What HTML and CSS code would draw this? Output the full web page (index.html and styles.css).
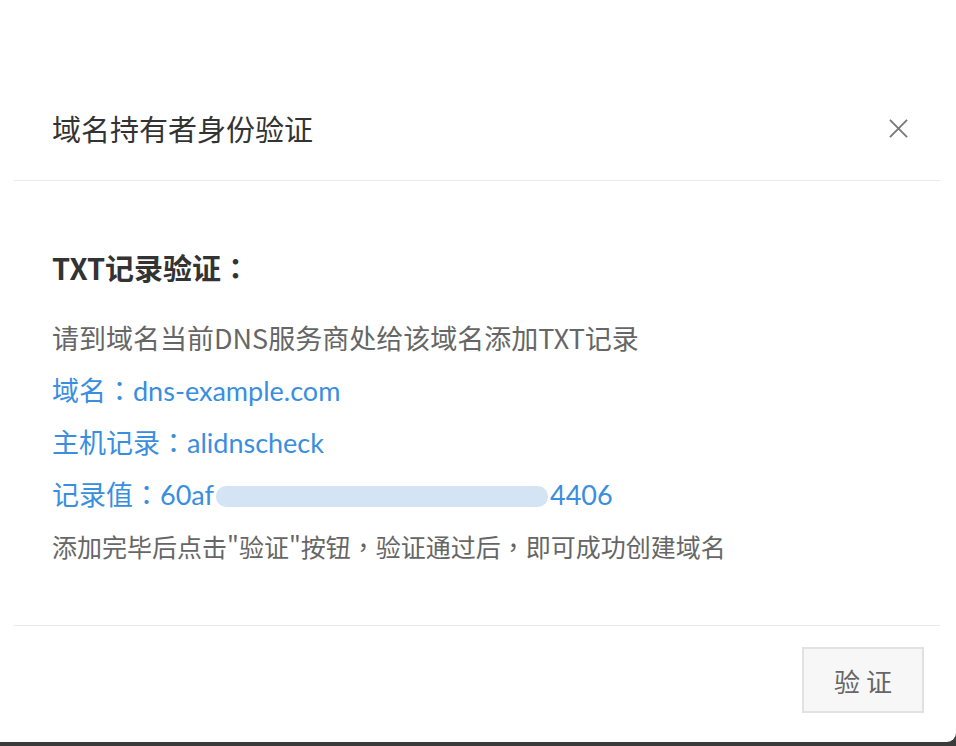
FILE: index.html
```html
<!DOCTYPE html>
<html lang="zh-CN">
<head>
    <meta charset="UTF-8">
    <meta name="viewport" content="width=device-width, initial-scale=1.0">
    <title>域名持有者身份验证</title>
    <link rel="stylesheet" href="styles.css">
</head>
<body>
    <div class="dialog">
        <div class="dialog-header">
            <h2 class="dialog-title">域名持有者身份验证</h2>
            <button class="close-btn" aria-label="关闭">
                <svg width="19" height="19" viewBox="0 0 20 20">
                    <path d="M1 1 L19 19 M19 1 L1 19" stroke="#7a7a7a" stroke-width="2" fill="none"/>
                </svg>
            </button>
        </div>
        <div class="divider"></div>

        <div class="dialog-body">
            <h3 class="section-title">TXT记录验证<span class="punct" lang="zh-Hant">：</span></h3>
            <p class="line muted">请到域名当前DNS服务商处给该域名添加TXT记录</p>
            <p class="line link">域名<span class="punct" lang="zh-Hant">：</span>dns-example.com</p>
            <p class="line link">主机记录<span class="punct" lang="zh-Hant">：</span>alidnscheck</p>
            <p class="line link">记录值<span class="punct" lang="zh-Hant">：</span>60af<span class="masked"></span>4406</p>
            <p class="line muted small">添加完毕后点击"验证"按钮<span class="punct" lang="zh-Hant">，</span>验证通过后<span class="punct" lang="zh-Hant">，</span>即可成功创建域名</p>
        </div>
        <div class="divider"></div>

        <div class="dialog-footer">
            <button class="verify-btn">验 证</button>
        </div>
    </div>
</body>
</html>
```

FILE: styles.css
```css
:root {
    --text-color: #333;
    --muted-color: #666;
    --link-color: #3a8ee0;
    --line-color: #e9e9f0;
}
body {
    margin: 0;
    background-color: #3b3b3b;
    font-family: "Noto Sans CJK SC", "Microsoft YaHei", sans-serif;
    color: var(--text-color);
    height: 746px;
    overflow: hidden;
}
.dialog {
    width: 956px;
    height: 742px;
    background-color: #fff;
    border-bottom-right-radius: 9px;
    overflow: hidden;
}
.dialog-header {
    display: flex;
    align-items: center;
    justify-content: space-between;
    padding: 108px 48px 32px 52px;
}
.dialog-title {
    margin: 0;
    font-size: 29px;
    font-weight: normal;
    line-height: 40px;
    color: #333;
}
.close-btn {
    background: none;
    border: none;
    padding: 0;
    width: 19px;
    height: 19px;
    cursor: pointer;
    display: flex;
}
.divider {
    height: 1px;
    background-color: var(--line-color);
    margin: 0 16px 0 14px;
}
.dialog-body {
    height: 323px;
    padding: 68px 52px 53px;
}
.section-title {
    height: 36px;
    margin: 0 0 27px;
    font-size: 29px;
    font-weight: bold;
    line-height: 36px;
    color: #333;
}
.punct {
    font-family: "Noto Sans CJK TC", "Noto Sans CJK SC", sans-serif;
}
.line {
    height: 52px;
    margin: 0;
    font-size: 27px;
    line-height: 52px;
    white-space: nowrap;
}
.muted {
    color: var(--muted-color);
}
.link {
    color: var(--link-color);
    font-family: Lato, "Noto Sans CJK SC", sans-serif;
}
.small {
    font-size: 25px;
}
.masked {
    display: inline-block;
    width: 332px;
    height: 21px;
    margin: 0 2px;
    vertical-align: -2px;
    background-color: #d5e4f5;
    border-radius: 10px;
}
.dialog-footer {
    display: flex;
    justify-content: flex-end;
    padding: 21px 32px 29px;
}
.verify-btn {
    width: 122px;
    height: 66px;
    background-color: #f7f7f7;
    border: 2px solid #e2e2e2;
    font-family: inherit;
    font-size: 26px;
    color: #666;
    cursor: pointer;
}
```
